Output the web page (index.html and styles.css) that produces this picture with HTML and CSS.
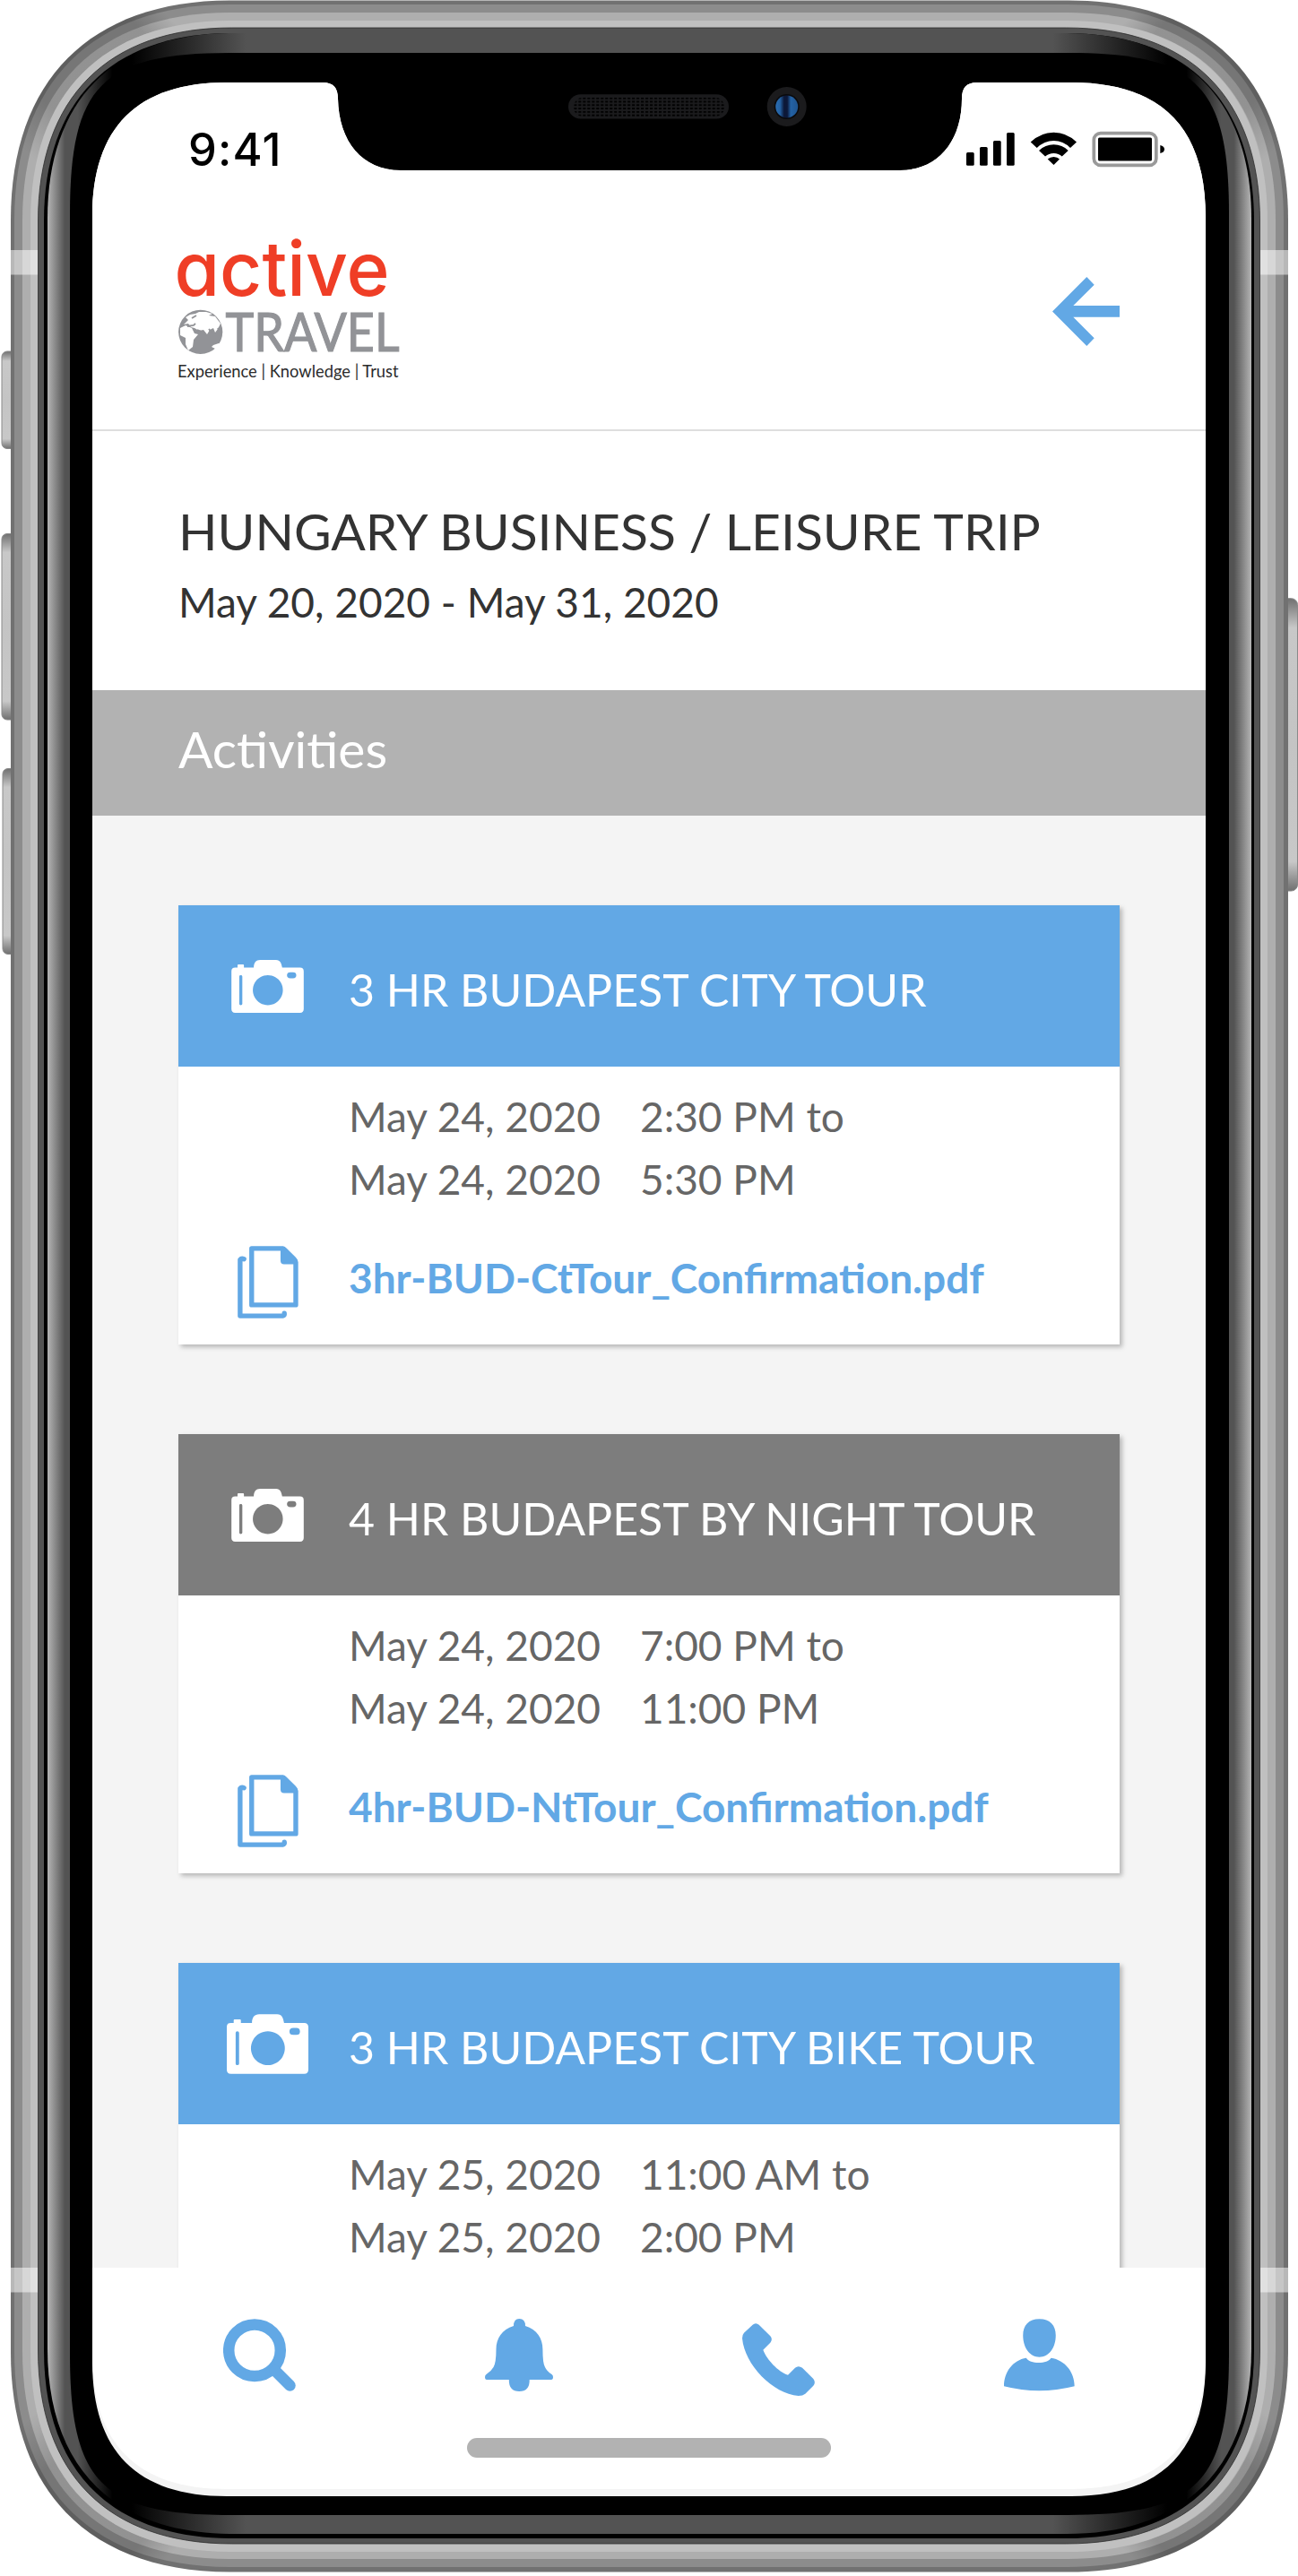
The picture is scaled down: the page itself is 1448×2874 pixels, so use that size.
FILE: index.html
```html
<!DOCTYPE html>
<html lang="en">
<head>
<meta charset="utf-8">
<title>Active Travel – Activities</title>
<link rel="stylesheet" href="styles.css">
</head>
<body>
<svg width="0" height="0" class="sprites" aria-hidden="true">
  <symbol id="camera" viewBox="55 50 272 199">
    <path fill-rule="evenodd" d="M69,79 H78 V70 Q78,67 81,67 H99 Q102,67 102,70 V79 H139 C139,61 147,50 163,50 H223 C239,50 243,62 246,79 H313 Q327,79 327,93 V235 Q327,249 313,249 H69 Q55,249 55,235 V93 Q55,79 69,79Z M192,107 A56.500,56.500 0 1 0 192.100,107Z M90,107 Q84.500,107 84.500,112 V215 Q84.500,220 90,220 Q96,220 96,215 V112 Q96,107 90,107Z M277,96 Q264,96 264,107.500 Q264,119 277,119 H287 Q299,119 299,107.500 Q299,96 287,96Z"/>
  </symbol>
  <symbol id="docs" viewBox="238 1147 190 226">
    <path fill="none" stroke="currentColor" stroke-width="15" stroke-linejoin="round" d="M282,1155 H378 Q382,1156 385,1159 L414,1188 Q419,1193 419.500,1198 V1331 H282Z"/>
    <path fill="currentColor" d="M372,1150 V1193 Q372,1204 383,1204 H424 V1190 L384,1150Z"/>
    <path fill="none" stroke="currentColor" stroke-width="15" stroke-linejoin="round" stroke-linecap="round" d="M258,1188 Q250,1185 246,1190 V1365 H379 Q385,1364 384,1357"/>
  </symbol>
</svg>

<div class="device">
  <svg class="frame" width="1448" height="2874" viewBox="0 0 1448 2874" aria-hidden="true">
    <defs>
      <linearGradient id="cap" x1="0" y1="0" x2="0" y2="1">
        <stop offset="0" stop-color="#707070"/><stop offset=".03" stop-color="#8a8a8a"/><stop offset=".1" stop-color="#c8c8c8"/>
        <stop offset=".5" stop-color="#c4c4c4"/><stop offset=".9" stop-color="#c8c8c8"/><stop offset=".97" stop-color="#8a8a8a"/><stop offset="1" stop-color="#707070"/>
      </linearGradient>
      <linearGradient id="rim" gradientUnits="userSpaceOnUse" x1="53" y1="0" x2="1396" y2="0">
        <stop offset="0" stop-color="#b4b4b4"/><stop offset=".0145" stop-color="#535353"/><stop offset=".025" stop-color="#535353"/><stop offset=".054" stop-color="#000"/><stop offset=".07" stop-color="#000"/><stop offset=".165" stop-color="#535353"/>
        <stop offset=".835" stop-color="#535353"/><stop offset=".93" stop-color="#000"/><stop offset=".946" stop-color="#000"/><stop offset=".975" stop-color="#535353"/><stop offset=".9855" stop-color="#535353"/><stop offset="1" stop-color="#b4b4b4"/>
      </linearGradient>
      <linearGradient id="shade" gradientUnits="userSpaceOnUse" x1="30" y1="170" x2="185" y2="15">
        <stop offset="0" stop-opacity="0"/><stop offset=".25" stop-opacity=".16"/><stop offset=".85" stop-opacity=".16"/><stop offset="1" stop-opacity="0"/>
      </linearGradient>
      <linearGradient id="lens" x1="0" y1="0" x2="1" y2="0">
        <stop offset="0" stop-color="#2a6cb0"/><stop offset=".2" stop-color="#2462a4"/><stop offset=".38" stop-color="#0c1838"/><stop offset=".52" stop-color="#0c1838"/><stop offset=".68" stop-color="#2462a4"/><stop offset="1" stop-color="#1f5590"/>
      </linearGradient>
      <pattern id="mesh" width="4.98" height="3.8" patternUnits="userSpaceOnUse" x="640.300" y="108.700"><rect width="3.200" height="2" fill="#020202"/></pattern>
      <path id="corner-shade" fill="url(#shade)" d="M12,245.500 C12,89.500 101,.5 257,.5 L258,23 C115,23 34,104 34,247Z"/>
    </defs>

    <g stroke="#8a8a8a" stroke-width="1">
      <rect x="2" y="392" width="20" height="108.500" rx="6" fill="url(#cap)"/>
      <rect x="2" y="595.500" width="20" height="207.500" rx="6" fill="url(#cap)"/>
      <rect x="3" y="857.500" width="20" height="207" rx="6" fill="url(#cap)"/>
      <rect x="1427" y="667.700" width="20.500" height="326.300" rx="7" fill="url(#cap)"/>
    </g>

    <path fill="#717171" d="M12,245.500 c0,-156 89,-245 245,-245 h935 c156,0 245,89 245,245 v2379 c0,156 -89,245 -245,245 h-935 c-156,0 -245,-89 -245,-245z"/>
    <path fill="#8c8c8c" d="M16,246 c0,-154 87,-241 241,-241 h934 c154,0 241,87 241,241 v2377 c0,154 -87,241 -241,241 h-934 c-154,0 -241,-87 -241,-241z"/>
    <path fill="#aeaeae" d="M25,246 c0,-148 84,-232 232,-232 h934 c148,0 232,84 232,232 v2377 c0,148 -84,232 -232,232 h-934 c-148,0 -232,-84 -232,-232z"/>
    <use href="#corner-shade"/>
    <use href="#corner-shade" transform="translate(1449,0) scale(-1,1)"/>
    <use href="#corner-shade" transform="translate(0,2870) scale(1,-1)"/>
    <use href="#corner-shade" transform="translate(1449,2870) scale(-1,-1)"/>
    <path fill="#c0c0c0" d="M34,247 c0,-143 81,-224 224,-224 h932 c143,0 224,81 224,224 v2376 c0,143 -81,224 -224,224 h-932 c-143,0 -224,-81 -224,-224z"/>
    <g fill="#fff" fill-opacity=".5">
      <rect x="12" y="279" width="31" height="27.500"/><rect x="1405" y="279" width="32" height="27.500"/>
      <rect x="12" y="2530" width="31" height="27.500"/><rect x="1405" y="2530" width="32" height="27.500"/>
    </g>
    <path fill="#535353" stroke="#2c2c2c" stroke-width=".8" d="M42.500,247 c0,-138 78,-216 216,-216 h931 c138,0 216,78 216,216 v2375 c0,138 -78,216 -216,216 h-931 c-138,0 -216,-78 -216,-216z"/>
    <path fill="#000" d="M49,247 c0,-135 75,-210 210,-210 h930 c135,0 210,75 210,210 v2375 c0,135 -75,210 -210,210 h-930 c-135,0 -210,-75 -210,-210z"/>
    <path fill="url(#rim)" d="M53,244 c0,-133 74,-207 207,-207 h929 c133,0 207,74 207,207 v2376 c0,133 -74,207 -207,207 h-929 c-133,0 -207,-74 -207,-207z"/>
    <path fill="#000" d="M78,239 c0,-144 36,-180 180,-180 h933 c144,0 180,36 180,180 v2387 c0,144 -36,180 -180,180 h-933 c-144,0 -180,-36 -180,-180z"/>

    <rect x="634" y="105.300" width="179" height="27.300" rx="13.600" fill="#1b1b1d"/>
    <rect x="640" y="108.700" width="168" height="21.500" rx="10" fill="url(#mesh)"/>
    <circle cx="877.700" cy="119" r="22" fill="#1b1b1d"/>
    <circle cx="877.700" cy="119" r="14" fill="#0a0a0c"/>
    <circle cx="877.700" cy="119" r="12.500" fill="url(#lens)"/>
  </svg>

  <main class="screen">
    <div class="status">
      <span class="clock">9:41</span>
      <svg class="indicators" width="222" height="42" viewBox="1078 146 222 42" aria-label="Signal, wifi, battery">
        <rect x="1078" y="170" width="8.700" height="14.700" rx="1.500"/><rect x="1093" y="164" width="8.700" height="20.700" rx="1.500"/>
        <rect x="1108" y="157" width="8.700" height="27.700" rx="1.500"/><rect x="1123" y="148" width="8.700" height="36.700" rx="1.500"/>
        <path d="M1149.700,158.500 Q1161,147.700 1175.500,147.700 Q1190,147.700 1201,158.500 L1194,165 Q1186,157 1175.500,157 Q1165,157 1156.700,165Z"/>
        <path d="M1159,168 Q1166,161.300 1175.500,161.300 Q1185,161.300 1191.700,168 L1184.700,174.500 Q1181,171 1175.500,171 Q1170,171 1166,174.500Z"/>
        <path d="M1168.700,177.500 Q1171.500,175 1175.500,175 Q1179.500,175 1182,177.500 L1175.500,184Z"/>
        <rect x="1220.300" y="148.600" width="69.500" height="35.800" rx="7.500" fill="none" stroke="#9a9a9a" stroke-width="3.700"/>
        <rect x="1225" y="153.500" width="60" height="26" rx="1.500"/>
        <path d="M1294.300,162 Q1299,163 1299,166.500 Q1299,170 1294.300,171Z"/>
      </svg>
    </div>

    <header class="topbar">
      <svg class="logo" width="250" height="170" viewBox="197 264 250 170" role="img" aria-label="Active Travel">
        <text class="logo-active" x="194.500" y="329.500" textLength="240" lengthAdjust="spacingAndGlyphs">active</text>
        <text class="logo-travel" x="251.500" y="391.800" textLength="194" lengthAdjust="spacingAndGlyphs">TRAVEL</text>
        <circle cx="223.700" cy="370.300" r="24.600" fill="#929397"/>
        <g fill="#fff">
          <path d="M205,362 L210,357 L207,354 L212,351 L218,350 L222,348 L230,348 L237,350 L233,352 L240,353 L246,361 L243,367 L240,371 L238,366 L234,368 L231,373 L227,368 L222,369 L217,366 L213,365 L210,361Z"/>
          <path d="M201,366 L207,363 L214,366 L217,372 L221,373 L216,379 L215,387 L210,391 L207,384 L207,377 L201,374Z"/>
          <path d="M238,385 L244,383 L247,384 L242,390 L236,387Z"/>
        </g>
        <path fill="none" stroke="#929397" stroke-width="1.800" d="M214,355 L219,352 M209,364 L216,363 L218,361 M220,368 L225,370 L229,373 M233,367 L236,371 M243,366 L246,372"/>
        <text class="logo-tag" x="198" y="421" textLength="246.500" lengthAdjust="spacingAndGlyphs">Experience | Knowledge | Trust</text>
      </svg>
      <svg class="back" width="75" height="77" viewBox="1174 309 75 77" aria-label="Back">
        <path d="M1174,347.500 L1212.300,309 L1220.700,317.700 L1197.300,341 H1249 V353.800 H1197.300 L1220.700,377.300 L1212.300,386Z"/>
      </svg>
    </header>

    <section class="trip">
      <h1>HUNGARY BUSINESS / LEISURE TRIP</h1>
      <p>May 20, 2020 - May 31, 2020</p>
    </section>

    <h2 class="section-title">Activities</h2>

    <div class="list">
      <article class="card">
        <div class="card-head"><svg class="cam"><use href="#camera"/></svg><h3>3 HR BUDAPEST CITY TOUR</h3></div>
        <div class="card-body">
          <div class="when"><span>May 24, 2020</span><span>2:30 PM to</span><span>May 24, 2020</span><span>5:30 PM</span></div>
          <div class="file"><svg class="doc"><use href="#docs"/></svg><a>3hr-BUD-CtTour_Confirmation.pdf</a></div>
        </div>
      </article>
      <article class="card">
        <div class="card-head gray"><svg class="cam"><use href="#camera"/></svg><h3>4 HR BUDAPEST BY NIGHT TOUR</h3></div>
        <div class="card-body">
          <div class="when"><span>May 24, 2020</span><span>7:00 PM to</span><span>May 24, 2020</span><span>11:00 PM</span></div>
          <div class="file"><svg class="doc"><use href="#docs"/></svg><a>4hr-BUD-NtTour_Confirmation.pdf</a></div>
        </div>
      </article>
      <article class="card">
        <div class="card-head"><svg class="cam large"><use href="#camera"/></svg><h3>3 HR BUDAPEST CITY BIKE TOUR</h3></div>
        <div class="card-body">
          <div class="when"><span>May 25, 2020</span><span>11:00 AM to</span><span>May 25, 2020</span><span>2:00 PM</span></div>
        </div>
      </article>
    </div>

    <nav class="tabs">
      <div class="tab-row">
        <svg width="81" height="81" viewBox="0 0 81 81" aria-label="Search"><circle cx="35" cy="35.300" r="28.800" fill="none" stroke="currentColor" stroke-width="12.500"/><path fill="none" stroke="currentColor" stroke-width="12.500" stroke-linecap="round" d="M58,58 L74.500,74.500"/></svg>
        <svg width="76" height="81" viewBox="0 0 76 81" aria-label="Notifications"><path d="M32,8 Q32,0 38.300,0 Q45,0 45,8 C58,12 64.400,22 64.400,34 Q64.400,50 67,54 Q69,58.500 74.500,62 Q76,63 76,65 Q76,68 74,68 H49.700 Q50,81 38.300,81 Q26.600,81 26.800,68 H2 Q0,68 0,65 Q0,63 1.500,62 Q7,58.500 9.500,54 Q12.500,49 12.500,34 C12.500,22 19,12 32,8Z"/></svg>
        <svg class="phone" width="81" height="81" viewBox="27 50 243 243" aria-label="Call"><path d="M62,55 Q72,46 83,55 L121,93 Q130,104 121,115 L97,139 C108,170 148,213 180,223 L204,199 Q215,190 228,199 L265,236 Q274,248 265,259 L238,286 Q230,293 215,293 C130,285 35,190 27,100 Q27,88 33,82Z"/></svg>
        <svg width="79" height="81" viewBox="900 37 238 242" aria-label="Profile"><path d="M1019,37 C1055,37 1074,58 1074,92 C1074,135 1050,165 1019,165 C988,165 964,135 964,92 C964,58 983,37 1019,37Z M975,168 C985,189 1048,189 1058,168 C1105,175 1137,215 1137,263 Q1018,293 900,263 C900,215 930,175 975,168Z"/></svg>
      </div>
      <div class="home"></div>
    </nav>
  </main>
</div>
</body>
</html>
```

FILE: styles.css
```css
* { box-sizing: border-box; }
body { margin: 0; background: #fff; font-family: Lato, "Liberation Sans", sans-serif; }
h1, h2, h3, p { margin: 0; font-weight: 400; }
svg { display: block; flex: none; }
.sprites { position: absolute; }

.device { position: relative; width: 1448px; height: 2874px; padding: 92px 0 0 103px; overflow: hidden; }
.frame { position: absolute; left: 0; top: 0; }

.screen {
  position: relative;
  width: 1242px; height: 2693px;
  display: flex; flex-direction: column;
  background: #f4f4f4;
  clip-path: path("M0,150 c0,-100 50,-150 150,-150 H257 C269,0 274,6 274,18 C275,66 301,98 344,98 H901 C943,98 970,66 970,18 C970,6 975,0 987,0 H1092 c100,0 150,50 150,150 v2393 c0,100 -50,150 -150,150 h-942 c-100,0 -150,-50 -150,-150 z");
}

.status {
  flex: none; height: 172px; padding: 54px 45px 0 107px;
  display: flex; justify-content: space-between; align-items: flex-start;
  background: #fff;
}
.clock { font: 500 50.5px/42px Inter, "Liberation Sans", sans-serif; letter-spacing: 1.2px; color: #000; }

.topbar {
  flex: none; height: 217px; padding: 0 96px 0 94px;
  display: flex; justify-content: space-between; align-items: flex-start;
  background: #fff; border-bottom: 2px solid #dedede;
}
.back { margin-top: 45px; fill: #62a8e5; }
.logo { overflow: visible; }
.logo-active { font: 500 84px Inter, sans-serif; font-feature-settings: "cv11"; fill: #ef3e26; }
.logo-travel { font: 400 60px Lato, sans-serif; fill: #929397; stroke: #929397; stroke-width: 1.2px; }
.logo-tag { font: 400 18.5px Lato, sans-serif; fill: #2c2c2c; }

.trip { flex: none; height: 289px; padding: 76px 96px 0; background: #fff; color: #333; }
.trip h1 { font-size: 57px; line-height: 70px; white-space: nowrap; }
.trip p { margin-top: 17px; font-size: 46px; line-height: 56px; }

.section-title { flex: none; height: 140px; padding-left: 96px; background: #b2b2b2; color: #fff; font-size: 57px; line-height: 131px; }

.list { flex: none; height: 1620px; padding: 100px 96px 0; display: flex; flex-direction: column; gap: 100px; overflow: hidden; }
.card { flex: none; height: 490px; background: #fff; box-shadow: 3px 3px 5px rgba(0,0,0,.25); }
.card-head { height: 180px; display: grid; grid-template-columns: 190px 1fr; align-items: center; background: #62a8e5; color: #fff; }
.card-head.gray { background: #7d7d7d; }
.card-head h3 { padding-top: 8px; font-size: 50px; line-height: 172px; white-space: nowrap; }
.cam { width: 81px; height: 59px; margin-left: 59px; fill: #fff; }
.cam.large { width: 91px; height: 67px; margin-left: 54px; }
.card-body { padding-top: 21px; }
.when { display: grid; grid-template-columns: 325px 1fr; padding-left: 190px; font-size: 46px; line-height: 70px; color: #666; }
.file { display: grid; grid-template-columns: 124px 1fr; padding-left: 66px; height: 70px; margin-top: 40px; color: #62a8e5; font-size: 46px; font-weight: 700; line-height: 70px; }
.doc { width: 68px; height: 81px; margin-top: -1px; }

.tabs {
  flex: none; height: 247px; background: #fff; color: #62a8e5; fill: currentColor;
  clip-path: path("M0,0 H1242 V97 c0,100 -50,150 -150,150 h-942 c-100,0 -150,-50 -150,-150 z");
}
.tab-row { display: flex; justify-content: space-between; padding: 57px 146px 0; }
.phone { margin-top: 5px; }
.home { width: 406px; height: 21.5px; margin: 47px auto 0; border-radius: 11px; background: #b2b2b2; }
```
